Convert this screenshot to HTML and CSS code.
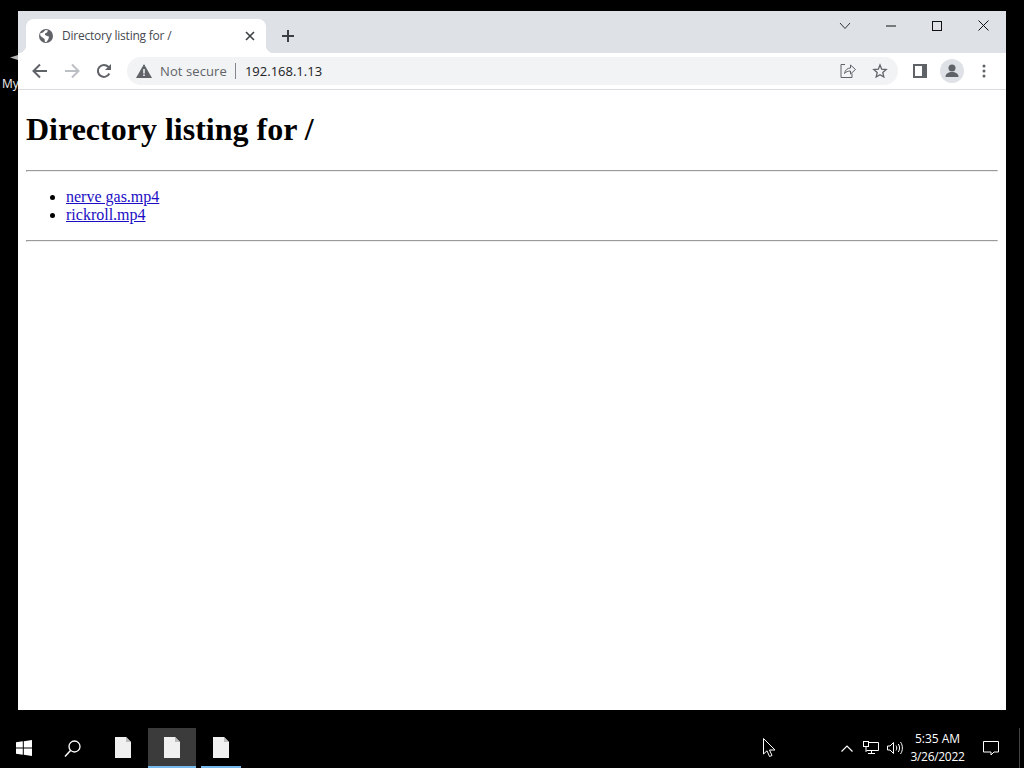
FILE: index.html
```html
<!DOCTYPE html>
<html lang="en">
<head>
  <meta charset="UTF-8" />
  <title>Directory listing for /</title>
  <link rel="stylesheet" href="styles.css">
</head>
<body>

  <div class="desktop">
    <svg class="desk-arrow" width="8" height="5" viewBox="0 0 8 5"><path d="M0 2.500 8 0v5z" fill="#b5b5b5"/></svg>
    <span class="desk-label">My</span>

    <div class="window">
      <div class="titlebar">
        <div class="tab">
          <svg class="tab-icon" width="16" height="16" viewBox="0 0 16 16">
            <circle cx="8" cy="8" r="7" fill="#5f6368"/>
            <path d="M2 5.500 5 4.500 7.500 2 10 2.500 9 4.500 7 5.500 7 7 9 8 11 8.500 10.500 11 8.500 14 7 14 6.500 11 4.500 9.500 2.500 8z" fill="#fff"/>
          </svg>
          <span class="tab-title">Directory listing for /</span>
          <svg class="tab-close" width="10" height="10" viewBox="0 0 10 10"><path d="M1 1 9 9M9 1 1 9" stroke="#3c4043" stroke-width="1.6"/></svg>
        </div>
        <svg class="new-tab" width="14" height="14" viewBox="0 0 14 14"><path d="M7 1v12M1 7h12" stroke="#3c4043" stroke-width="2"/></svg>
        <div class="win-controls">
          <span class="win-btn"><svg width="12" height="8" viewBox="0 0 12 8"><path d="M1 1 6 6.500 11 1" fill="none" stroke="#333" stroke-width="1"/></svg></span>
          <span class="win-btn"><svg width="10" height="2" viewBox="0 0 10 2"><path d="M0 1h10" stroke="#111" stroke-width="1"/></svg></span>
          <span class="win-btn"><svg width="10" height="10" viewBox="0 0 10 10"><rect x=".5" y=".5" width="9" height="9" fill="none" stroke="#111"/></svg></span>
          <span class="win-btn"><svg width="11" height="11" viewBox="0 0 11 11"><path d="M.5.500l10 10M10.500.500l-10 10" stroke="#111" stroke-width="1"/></svg></span>
        </div>
      </div>

      <div class="toolbar">
        <span class="tool-btn"><svg width="16" height="16" viewBox="0 0 16 16"><path d="M15 8H2M8 1.500 1.500 8 8 14.500" fill="none" stroke="#5f6368" stroke-width="2"/></svg></span>
        <span class="tool-btn"><svg width="16" height="16" viewBox="0 0 16 16"><path d="M1 8h13M8 1.500 14.500 8 8 14.500" fill="none" stroke="#bcc0c4" stroke-width="2"/></svg></span>
        <span class="tool-btn"><svg width="16" height="16" viewBox="0 0 16 16"><path d="M13.300 10.500A6 6 0 1 1 12.300 3.800L14 5.500" fill="none" stroke="#5f6368" stroke-width="2"/><path d="M15 1v6H9z" fill="#5f6368"/></svg></span>
        <div class="omnibox">
          <svg class="warn" width="16" height="14" viewBox="0 0 16 14"><path d="M8 0 16 14H0z" fill="#5f6368"/><path d="M7.200 5h1.600v4.500H7.200zM7.200 10.500h1.600V12H7.200z" fill="#f1f3f4"/></svg>
          <span class="not-secure">Not secure</span>
          <span class="omni-sep"></span>
          <span class="url">192.168.1.13</span>
          <div class="omni-actions">
            <svg width="16" height="16" viewBox="0 0 16 16"><path d="M5 1.500H1v13h11v-4" fill="none" stroke="#5f6368" stroke-width="1"/><path d="M4.500 10.500C5 7 7.500 5 10.500 5V2l5 4.500-5 4.500V8C8 8 6 8.800 4.500 10.500z" fill="none" stroke="#5f6368" stroke-width="1"/></svg>
            <svg width="16" height="16" viewBox="0 0 16 16"><path d="M8 2 9.700 6.200l4.500.4-3.400 3 1 4.400L8 11.700 4.200 14l1-4.400-3.400-3 4.500-.4z" fill="none" stroke="#5f6368" stroke-width="1.300"/></svg>
          </div>
        </div>
        <span class="tool-btn side-btn"><svg width="14" height="14" viewBox="0 0 14 14"><rect x="1" y="1" width="12" height="12" fill="none" stroke="#5f6368" stroke-width="2"/><rect x="9" y="1" width="4" height="12" fill="#5f6368"/></svg></span>
        <span class="tool-btn"><span class="avatar"><svg width="16" height="16" viewBox="0 0 16 16"><circle cx="8" cy="5" r="3.500" fill="#5f6368"/><path d="M1.500 14c0-3.500 3-5 6.500-5s6.500 1.500 6.500 5z" fill="#5f6368"/></svg></span></span>
        <span class="tool-btn"><svg width="4" height="14" viewBox="0 0 4 14"><circle cx="2" cy="2" r="1.500" fill="#5f6368"/><circle cx="2" cy="7" r="1.500" fill="#5f6368"/><circle cx="2" cy="12" r="1.500" fill="#5f6368"/></svg></span>
      </div>

      <main class="page">
        <h1>Directory listing for /</h1>
        <hr>
        <ul>
          <li><a href="#">nerve gas.mp4</a></li>
          <li><a href="#">rickroll.mp4</a></li>
        </ul>
        <hr>
      </main>
    </div>
  </div>

  <div class="taskbar">
    <span class="task-btn"><svg width="16" height="16" viewBox="0 0 16 16"><path d="M0 2.300 6.800 1.300V7.500H0zM7.800 1.200 16 0V7.500H7.800zM0 8.500H6.800V14.700L0 13.700zM7.800 8.500H16V16L7.800 14.800z" fill="#fff"/></svg></span>
    <span class="task-btn"><svg width="17" height="17" viewBox="0 0 17 17"><circle cx="10.500" cy="6.500" r="5.500" fill="none" stroke="#fff" stroke-width="1.300"/><path d="M6.500 10.500 1 16.500" stroke="#fff" stroke-width="1.500"/></svg></span>
    <span class="task-gap"></span>
    <span class="task-btn file-btn"><svg width="16" height="21" viewBox="0 0 16 21"><path d="M0 0H11L16 5V21H0z" fill="#f0f0f0"/><path d="M11 0 16 5H11z" fill="#bdbdbd"/></svg></span>
    <span class="task-btn file-btn active"><svg width="16" height="21" viewBox="0 0 16 21"><path d="M0 0H11L16 5V21H0z" fill="#f0f0f0"/><path d="M11 0 16 5H11z" fill="#bdbdbd"/></svg></span>
    <span class="task-btn file-btn running"><svg width="16" height="21" viewBox="0 0 16 21"><path d="M0 0H11L16 5V21H0z" fill="#f0f0f0"/><path d="M11 0 16 5H11z" fill="#bdbdbd"/></svg></span>

    <svg class="cursor" width="13" height="19" viewBox="0 0 13 19"><path d="M.5.500V16L4 12.800 6.500 18.500 9 17.500 6.500 12H12z" fill="#000" stroke="#fff" stroke-width="1"/></svg>

    <div class="tray">
      <span class="tray-item"><svg width="12" height="7" viewBox="0 0 12 7"><path d="M.5 6.500 6 1l5.500 5.500" fill="none" stroke="#fff" stroke-width="1.200"/></svg></span>
      <span class="tray-item"><svg width="16" height="14" viewBox="0 0 16 14"><path d="M3.500 1.500H15.500V9.500H3.500M8.500 9.500V12.500M5 12.500H12" fill="none" stroke="#fff"/><rect x=".5" y=".5" width="5" height="5" fill="#000" stroke="#fff"/><path d="M3 5.500V11" stroke="#fff"/></svg></span>
      <span class="tray-item"><svg width="16" height="14" viewBox="0 0 16 14"><path d="M.5 5v4H3l3.500 3.500v-11L3 5zM9 4.500c1 1.500 1 3.500 0 5M11.300 3c1.700 2.500 1.700 5.500 0 8M13.500 1c2.500 3.500 2.500 8.500 0 12" fill="none" stroke="#fff"/></svg></span>
      <div class="clock">
        <span>5:35 AM</span>
        <span class="clock-date">3/26/2022</span>
      </div>
      <span class="tray-item notify"><svg width="16" height="15" viewBox="0 0 16 15"><path d="M.5.500h15v10.500h-4.500l-3 3v-3H.5z" fill="none" stroke="#fff"/></svg></span>
      <span class="show-desktop"></span>
    </div>
  </div>

</body>
</html>
```

FILE: styles.css
```css
* {
  box-sizing: border-box;
}
body {
  margin: 0;
  width: 1024px;
  height: 768px;
  overflow: hidden;
  background: #000;
  display: flex;
  flex-direction: column;
}
svg {
  display: block;
}

.desktop {
  position: relative;
  height: 728px;
  padding: 11px 18px 18px;
}
.desk-arrow {
  position: absolute;
  left: 10px;
  top: 55px;
}
.desk-label {
  position: absolute;
  left: 2px;
  top: 75px;
  color: #eee;
  font: 12px "Open Sans", sans-serif;
}

.window {
  position: relative;
  height: 699px;
  background: #fff;
  display: flex;
  flex-direction: column;
}

.titlebar {
  height: 42px;
  background: #dee1e6;
  display: flex;
  align-items: flex-end;
  padding-left: 8px;
}
.tab {
  position: relative;
  width: 240px;
  height: 34px;
  background: #fff;
  border-radius: 8px 8px 0 0;
  display: flex;
  align-items: center;
  padding: 0 11px 1px 12px;
}
.tab::before,
.tab::after {
  content: "";
  position: absolute;
  bottom: 0;
  width: 8px;
  height: 8px;
}
.tab::before {
  left: -8px;
  background: radial-gradient(circle at 0 0, transparent 8px, #fff 8.5px);
}
.tab::after {
  right: -8px;
  background: radial-gradient(circle at 100% 0, transparent 8px, #fff 8.5px);
}
.tab-icon {
  flex: none;
}
.tab-title {
  margin-left: 8px;
  flex: 1;
  color: #45494f;
  font: 12px "Open Sans", sans-serif;
  letter-spacing: -0.22px;
  white-space: nowrap;
}
.new-tab {
  margin: 0 0 10px 15px;
}
.win-controls {
  margin-left: auto;
  align-self: flex-start;
  display: flex;
}
.win-btn {
  width: 46px;
  height: 29px;
  display: flex;
  align-items: center;
  justify-content: center;
}

.toolbar {
  height: 37px;
  background: #fff;
  border-bottom: 1px solid #dadce0;
  display: flex;
  align-items: center;
  padding: 0 6px;
}
.tool-btn {
  flex: none;
  width: 32px;
  height: 32px;
  display: flex;
  align-items: center;
  justify-content: center;
}
.omnibox {
  width: 771px;
  height: 28px;
  margin-left: 7px;
  background: #f1f3f4;
  border-radius: 14px;
  display: flex;
  align-items: center;
  padding: 0 10px 0 9px;
  font: 13px "Open Sans", sans-serif;
}
.not-secure {
  margin-left: 8px;
  color: #5f6368;
  letter-spacing: 0.1px;
}
.omni-sep {
  width: 1px;
  height: 16px;
  margin: 0 9px 0 8px;
  background: #80868b;
}
.url {
  color: #202124;
}
.omni-actions {
  margin-left: auto;
  display: flex;
  gap: 16px;
}
.side-btn {
  margin-left: 6px;
}
.avatar {
  width: 24px;
  height: 24px;
  border-radius: 50%;
  background: #dee1e6;
  display: flex;
  align-items: center;
  justify-content: center;
}

.page {
  flex: 1;
  padding: 0 8px;
  color: #000;
  font: 16px/18px "Liberation Serif", serif;
}
.page h1 {
  margin: 21.44px 0;
  font-size: 32px;
  line-height: 37px;
  font-weight: bold;
}
.page hr {
  margin: 0;
}
.page ul {
  margin: 16px 0;
  padding-left: 40px;
}
.page a {
  color: #1a0dc4;
}

.taskbar {
  position: relative;
  height: 40px;
  background: #000;
  display: flex;
  color: #fff;
}
.task-btn {
  flex: none;
  width: 48px;
  height: 40px;
  display: flex;
  align-items: center;
  justify-content: center;
}
.task-gap {
  width: 2px;
}
.file-btn {
  width: 49px;
  border-bottom: 2px solid transparent;
}
.file-btn.active {
  background: #3b3b3b;
  border-bottom-color: #76b9ed;
  margin-left: 1px;
  width: 48px;
}
.file-btn.running {
  position: relative;
}
.file-btn.running::after {
  content: "";
  position: absolute;
  left: 5px;
  right: 4px;
  bottom: -2px;
  height: 2px;
  background: #76b9ed;
}
.cursor {
  position: absolute;
  left: 763px;
  top: 10px;
}
.tray {
  margin-left: auto;
  display: flex;
  align-items: center;
}
.tray-item {
  width: 24px;
  height: 40px;
  display: flex;
  align-items: center;
  justify-content: center;
}
.clock {
  width: 61px;
  display: flex;
  flex-direction: column;
  align-items: center;
  font: 12px/18px "Open Sans", sans-serif;
}
.clock-date {
  letter-spacing: -0.3px;
}
.notify {
  width: 46px;
}
.show-desktop {
  width: 1px;
  height: 40px;
  margin: 0 4px 0 5px;
  background: #444;
}
```
